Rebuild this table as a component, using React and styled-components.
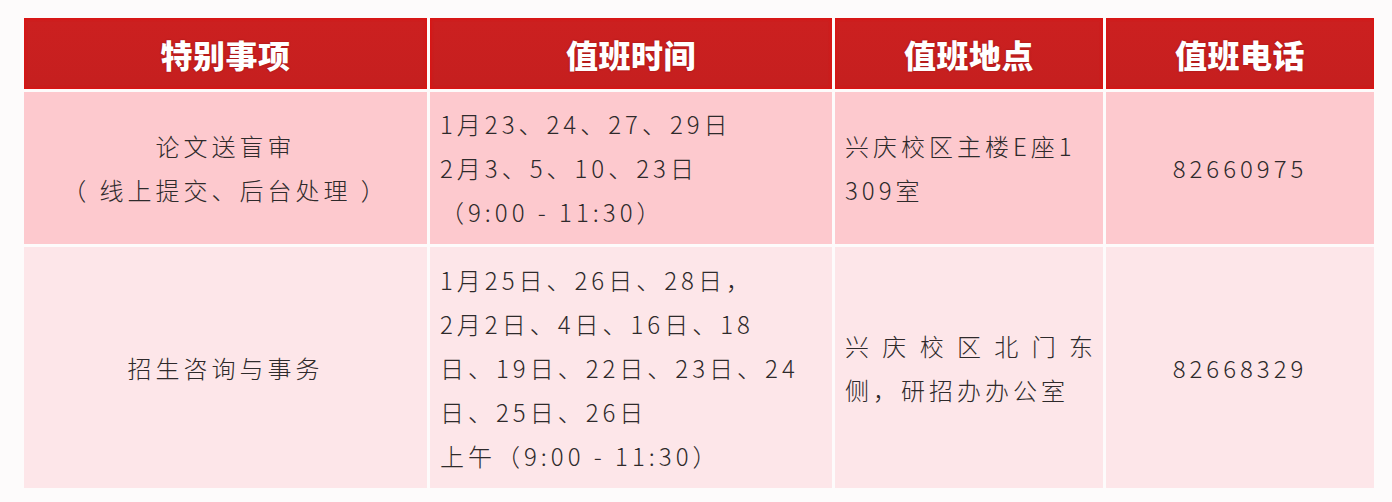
import React from "react";
import styled, { createGlobalStyle } from "styled-components";

const Global = createGlobalStyle`
  html, body { margin: 0; padding: 0; background: #fdfbfb; }
  body { font-family: "Noto Sans CJK SC", "Noto Sans", sans-serif; }
`;

const Page = styled.div`
  width: 1392px;
  height: 502px;
  padding: 18px 0 0 24px;
  box-sizing: border-box;
`;

const Table = styled.div`
  display: grid;
  grid-template-columns: 403px 402px 268px 268px;
  grid-template-rows: 71px 152px 241px;
  gap: 3px;
  width: 1350px;
`;

const HeadCell = styled.div`
  display: flex;
  align-items: center;
  justify-content: center;
  background: linear-gradient(180deg, #cc2020 0%, #c51f1f 100%);
  box-shadow: inset 0 0 3px 1px #e0100f;
  color: #ffffff;
  font-family: "Noto Sans CJK SC", sans-serif;
  font-weight: 900;
  font-size: 32px;
  letter-spacing: 0.5px;
  text-shadow: 0 0 2px rgba(90, 0, 0, 0.45);
`;

const Cell = styled.div`
  display: flex;
  flex-direction: column;
  justify-content: center;
  align-items: ${(p) => (p.$center ? "center" : "stretch")};
  text-align: ${(p) => (p.$center ? "center" : "left")};
  padding: 0 10px;
  background: ${(p) => (p.$tone === "light" ? "#fde6e9" : "#fdc9ce")};
  color: #2e2a2b;
  font-size: 24px;
  font-weight: 300;
  line-height: 44px;
  letter-spacing: 4px;
  white-space: pre;
`;

const Line = styled.div`
  text-align: ${(p) => (p.$justify ? "justify" : "inherit")};
  text-align-last: ${(p) => (p.$justify ? "justify" : "auto")};
  letter-spacing: ${(p) => (p.$justify ? "0" : "inherit")};
  white-space: ${(p) => (p.$justify ? "normal" : "pre")};
`;

const headers = ["特别事项", "值班时间", "值班地点", "值班电话"];

const rows = [
  {
    tone: "dark",
    item: ["论文送盲审", "（ 线上提交、后台处理 ）"],
    time: ["1月23、24、27、29日", "2月3、5、10、23日", "（9:00 - 11:30）"],
    place: [{ t: "兴庆校区主楼E座1" }, { t: "309室" }],
    phone: "82660975",
  },
  {
    tone: "light",
    item: ["招生咨询与事务"],
    time: [
      "1月25日、26日、28日，",
      "2月2日、4日、16日、18",
      "日、19日、22日、23日、24",
      "日、25日、26日",
      "上午（9:00 - 11:30）",
    ],
    place: [{ t: "兴庆校区北门东", justify: true }, { t: "侧，研招办办公室" }],
    phone: "82668329",
  },
];

export default function App() {
  return (
    <Page>
      <Global />
      <Table>
        {headers.map((h) => (
          <HeadCell key={h}>{h}</HeadCell>
        ))}
        {rows.map((r, i) => (
          <React.Fragment key={i}>
            <Cell $tone={r.tone} $center>
              {r.item.map((l) => (
                <Line key={l}>{l}</Line>
              ))}
            </Cell>
            <Cell $tone={r.tone}>
              {r.time.map((l) => (
                <Line key={l}>{l}</Line>
              ))}
            </Cell>
            <Cell $tone={r.tone}>
              {r.place.map((l) => (
                <Line key={l.t} $justify={l.justify}>
                  {l.t}
                </Line>
              ))}
            </Cell>
            <Cell $tone={r.tone} $center>
              <Line>{r.phone}</Line>
            </Cell>
          </React.Fragment>
        ))}
      </Table>
    </Page>
  );
}
